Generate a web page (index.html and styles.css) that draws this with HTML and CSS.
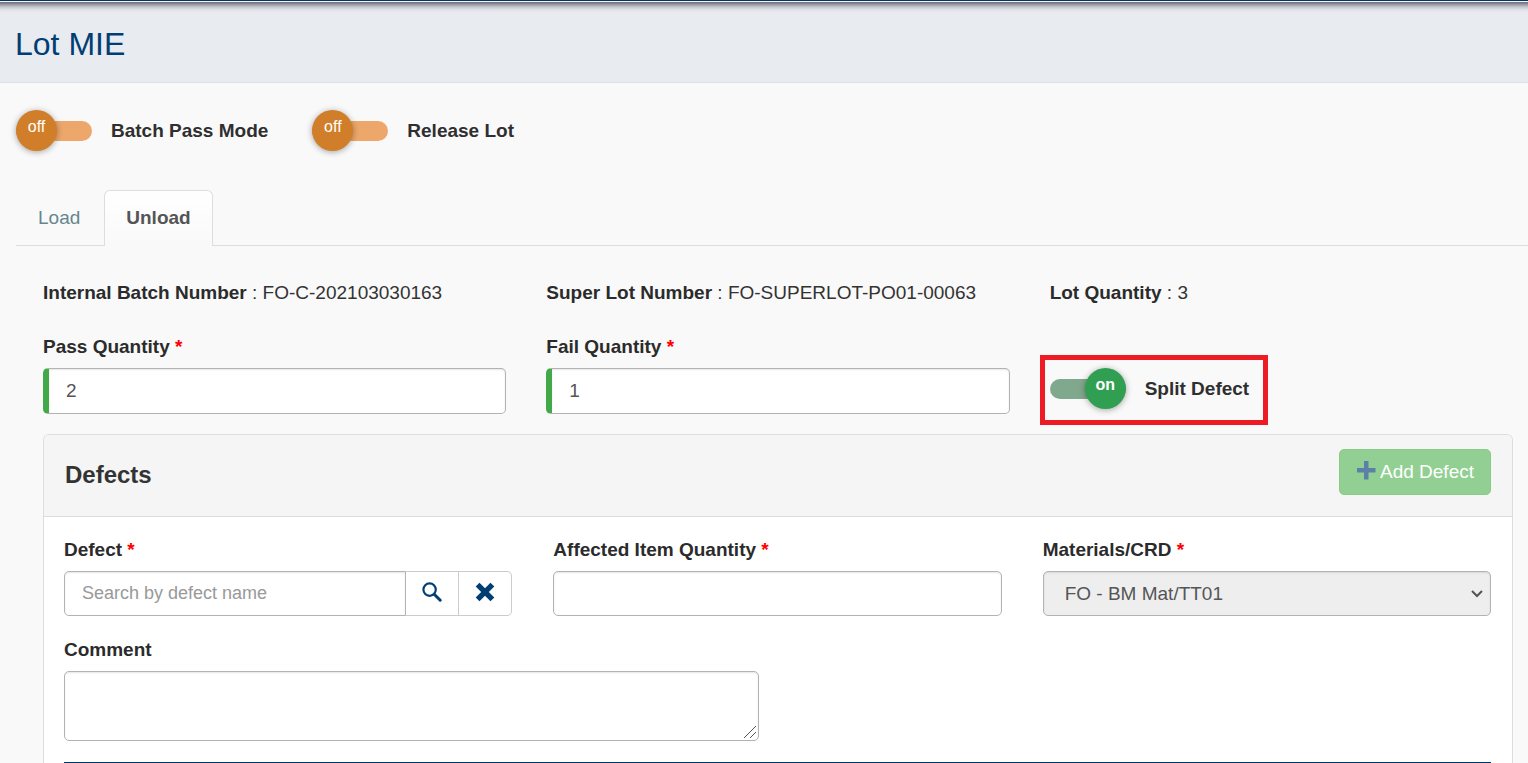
FILE: index.html
```html
<!DOCTYPE html>
<html lang="en">
<head>
<meta charset="utf-8">
<meta name="viewport" content="width=device-width, initial-scale=1">
<title>Lot MIE</title>
<link rel="stylesheet" href="styles.css">
</head>
<body>
<header class="page-header">
  <h1 class="page-title">Lot MIE</h1>
</header>
<main class="content">
  <div class="toggles">
    <label class="toggle">
      <span class="switch">
        <input class="switch-input" type="checkbox">
        <span class="switch-track"></span>
        <span class="switch-knob">off</span>
      </span>
      Batch Pass Mode
    </label>
    <label class="toggle">
      <span class="switch">
        <input class="switch-input" type="checkbox">
        <span class="switch-track"></span>
        <span class="switch-knob">off</span>
      </span>
      Release Lot
    </label>
  </div>

  <nav class="tabs">
    <a class="tab" href="#load">Load</a>
    <a class="tab tab-active" href="#unload">Unload</a>
  </nav>

  <form class="lot-form">
    <div class="grid grid-info">
      <div><b>Internal Batch Number</b> : FO-C-202103030163</div>
      <div><b>Super Lot Number</b> : FO-SUPERLOT-PO01-00063</div>
      <div><b>Lot Quantity</b> : 3</div>
    </div>

    <div class="grid grid-quantity">
      <div class="field">
        <label class="label" for="pass">Pass Quantity <span class="required">*</span></label>
        <input class="control control-valid" id="pass" type="text" value="2">
      </div>
      <div class="field">
        <label class="label" for="fail">Fail Quantity <span class="required">*</span></label>
        <input class="control control-valid" id="fail" type="text" value="1">
      </div>
      <div class="split">
        <label class="toggle toggle-highlight">
          <span class="switch">
            <input class="switch-input" type="checkbox" checked>
            <span class="switch-track"></span>
            <span class="switch-knob">on</span>
          </span>
          Split Defect
        </label>
      </div>
    </div>

    <section class="panel">
      <div class="panel-header">
        <h2 class="panel-title">Defects</h2>
        <button class="add-button" type="button" disabled>
          <svg class="add-icon" viewBox="0 0 20 20" aria-hidden="true"><path d="M8 1h4.5v7h7v4.5h-7v7H8v-7H1V8h7z"/></svg>
          Add Defect
        </button>
      </div>
      <div class="panel-body">
        <div class="grid grid-defect">
          <div class="field">
            <label class="label" for="defect">Defect <span class="required">*</span></label>
            <div class="search-group">
              <input class="control search-input" id="defect" type="text" placeholder="Search by defect name">
              <button class="search-button" type="button" aria-label="Search">
                <svg class="icon" viewBox="0 0 20 20" aria-hidden="true"><circle cx="7.6" cy="7.6" r="6.2" fill="none" stroke="currentColor" stroke-width="2.2"/><path d="M12.2 12.2l6 6" stroke="currentColor" stroke-width="3" stroke-linecap="round"/></svg>
              </button>
              <button class="search-button search-button-last" type="button" aria-label="Clear">
                <svg class="icon" viewBox="0 0 20 20" aria-hidden="true"><path d="M2.6 2.6l14.8 14.8M17.4 2.6L2.6 17.4" stroke="currentColor" stroke-width="5.4"/></svg>
              </button>
            </div>
          </div>
          <div class="field">
            <label class="label" for="affected">Affected Item Quantity <span class="required">*</span></label>
            <input class="control" id="affected" type="text">
          </div>
          <div class="field">
            <label class="label" for="material">Materials/CRD <span class="required">*</span></label>
            <div class="select-box">
              <select class="control select" id="material" disabled>
                <option>FO - BM Mat/TT01</option>
              </select>
              <svg class="select-arrow" viewBox="0 0 12 8" aria-hidden="true"><path d="M1 1l5 5 5-5" fill="none" stroke="#555" stroke-width="2"/></svg>
            </div>
          </div>
        </div>
        <div class="field">
          <label class="label" for="comment">Comment</label>
          <textarea class="control comment" id="comment"></textarea>
        </div>
        <hr class="divider">
      </div>
    </section>
  </form>
</main>
</body>
</html>
```
FILE: styles.css
```css
* {
  box-sizing: border-box;
}

body {
  margin: 0;
  background: #f9f9f9;
  color: #333;
  font: 19px/28px "Liberation Sans", Arial, sans-serif;
}

.page-header {
  padding: 24px 15px 17px;
  border-bottom: 1px solid #dcdfe9;
  background: linear-gradient(#003366 0 1px, #f4f6f8 1px 2px, #6d6a75 2px, #8f8f98 4px, #c4c8ce 7px, #e0e4e9 10px, #e8ecf1 13px);
}

.page-title {
  margin: 0;
  color: #003e73;
  font-size: 32px;
  font-weight: normal;
  line-height: 41px;
}

.content {
  padding: 27px 0 0 16px;
}

.toggles {
  display: flex;
  gap: 44px;
}

.toggle {
  display: inline-flex;
  align-items: center;
  gap: 19px;
  color: #2f2f2f;
  font-weight: bold;
}

.switch {
  position: relative;
  display: flex;
  align-items: center;
  width: 76px;
  height: 41px;
}

.switch-input {
  position: absolute;
  inset: 0;
  width: 100%;
  height: 100%;
  margin: 0;
  opacity: 0;
}

.switch-track {
  width: 100%;
  height: 20px;
  border-radius: 10px;
  background: #eda76b;
}

.switch-knob {
  position: absolute;
  top: 0;
  left: 0;
  width: 41px;
  height: 41px;
  border-radius: 50%;
  background: #d07e29;
  box-shadow: 0 1px 6px rgba(0, 0, 0, 0.35);
  color: #fff;
  font-size: 16px;
  font-weight: normal;
  line-height: 34px;
  text-align: center;
  pointer-events: none;
}

.switch-input:checked ~ .switch-track {
  background: #80a88c;
}

.switch-input:checked ~ .switch-knob {
  right: 0;
  left: auto;
  background: #309f52;
  font-weight: bold;
}

.tabs {
  display: flex;
  gap: 2px;
  margin-top: 39px;
  border-bottom: 1px solid #ddd;
}

.tab {
  padding: 13px 21px;
  border: 1px solid transparent;
  border-bottom: 0;
  border-radius: 6px 6px 0 0;
  color: #66868d;
  text-decoration: none;
}

.tab-active {
  margin-bottom: -1px;
  padding-bottom: 14px;
  border-color: #ddd;
  background: linear-gradient(#fff, #f9f9f9);
  color: #555;
  font-weight: bold;
}

.lot-form {
  padding: 33px 15px 0 27px;
}

.grid {
  display: grid;
  grid-template-columns: repeat(3, minmax(0, 1fr));
  column-gap: 40px;
}

.grid b {
  color: #2b2b2b;
}

.grid-quantity {
  margin-top: 26px;
}

.field {
  display: flex;
  flex-direction: column;
  gap: 7px;
}

.label {
  color: #2b2b2b;
  font-weight: bold;
}

.required {
  color: #f00;
}

.control {
  width: 100%;
  height: 45px;
  padding: 0 17px;
  border: 1px solid #b3b3b3;
  border-radius: 5px;
  background: #fff;
  box-shadow: inset 0 1px 2px rgba(0, 0, 0, 0.1);
  color: #555;
  font: inherit;
}

.control-valid {
  height: 46px;
  border-left: 6px solid #42a948;
}

.split {
  padding-top: 35px;
}

.toggle-highlight {
  position: relative;
}

.toggle-highlight::after {
  position: absolute;
  inset: -13px -19px -16px -10px;
  border: 5px solid #ed1c24;
  content: "";
  pointer-events: none;
}

.panel {
  margin-top: 20px;
  border: 1px solid #ddd;
  border-bottom: 0;
  border-radius: 6px 6px 0 0;
  background: #fff;
}

.panel-header {
  display: flex;
  align-items: flex-start;
  justify-content: space-between;
  padding: 14px 21px 21px;
  border-bottom: 1px solid #ddd;
  border-radius: 5px 5px 0 0;
  background: #f5f5f5;
}

.panel-title {
  margin: 10px 0 0;
  color: #333;
  font-size: 24px;
  line-height: 32px;
}

.add-button {
  display: flex;
  align-items: center;
  gap: 4px;
  height: 46px;
  padding: 0 16px;
  border: 1px solid #88cc8a;
  border-radius: 5px;
  background: #92cf93;
  color: #fff;
  font: inherit;
}

.add-icon {
  width: 20px;
  height: 20px;
  margin-bottom: 4px;
  fill: #5c80a8;
}

.panel-body {
  padding: 19px 21px 0 20px;
}

.grid-defect {
  column-gap: 41px;
  margin-bottom: 20px;
}

.search-group {
  display: flex;
}

.search-input {
  flex: 1;
  min-width: 0;
  border-radius: 5px 0 0 5px;
  font-size: 18px;
}

.search-input::placeholder {
  color: #999;
}

.search-button {
  display: flex;
  align-items: center;
  justify-content: center;
  width: 53px;
  height: 45px;
  padding: 0 0 4px;
  border: 1px solid #ccc;
  border-left: 0;
  background: #fff;
  color: #003e73;
}

.search-button-last {
  border-radius: 0 5px 5px 0;
}

.icon {
  width: 20px;
  height: 20px;
}

.select-box {
  position: relative;
}

.select {
  display: block;
  padding: 0 36px 0 21px;
  background: #eee;
  opacity: 1;
  appearance: none;
}

.select-arrow {
  position: absolute;
  top: 19px;
  right: 8px;
  width: 12px;
  height: 8px;
  pointer-events: none;
}

.comment {
  display: block;
  width: calc(50% - 19px);
  min-height: 70px;
  padding: 8px 17px;
}

.comment::-webkit-resizer {
  background: url("data:image/svg+xml,%3Csvg xmlns='http://www.w3.org/2000/svg' viewBox='0 0 15 15'%3E%3Cpath d='M1 13L13 1M7 13l6-6' stroke='%23555'/%3E%3C/svg%3E") no-repeat center / 15px 15px;
}

.divider {
  height: 1px;
  margin: 21px 0 0;
  border: 0;
  background: #003366;
}
```
